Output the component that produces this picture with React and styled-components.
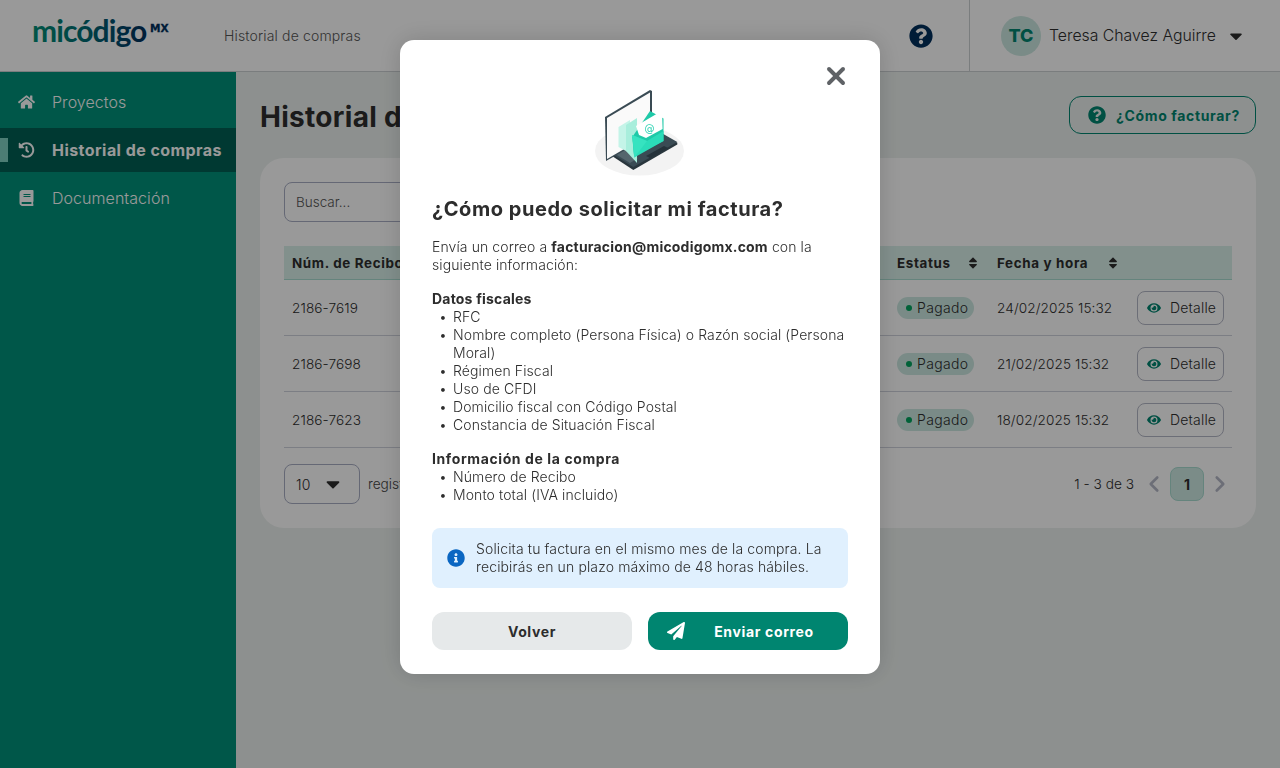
import React from "react";
import styled, { createGlobalStyle } from "styled-components";
import {
  FaHome, FaHistory, FaBook, FaQuestionCircle, FaEye, FaSort, FaCaretDown,
  FaPaperPlane, FaInfoCircle,
} from "react-icons/fa";
import { X, ChevronLeft, ChevronRight } from "lucide-react";

const font = `"Inter", "Noto Sans", sans-serif`;
const ink = "#2d2d2d";

const Global = createGlobalStyle`
  * { box-sizing: border-box; }
  html, body { margin: 0; padding: 0; height: 100%; overflow: hidden; }
  body { font-family: ${font}; color: ${ink}; font-size: 14px; }
`;

const Page = styled.div`
  height: 768px;
  display: grid;
  grid-template-columns: 236px 1fr;
  grid-template-rows: 72px 1fr;
  background: #ecf1ef;
`;

const Header = styled.header`
  grid-column: 1 / 3;
  display: flex;
  align-items: stretch;
  background: #fff;
  border-bottom: 1px solid #ccd0d3;
`;
const LogoBox = styled.div`
  width: 224px;
  padding-left: 30px;
  display: flex;
  align-items: center;
`;
const Crumb = styled.div`
  flex: 1;
  display: flex;
  align-items: center;
  font-size: 14px;
  letter-spacing: 0.15px;
  font-weight: 300;
  color: #555;
`;
const HelpBox = styled.div`
  width: 60px;
  margin-right: 18px;
  display: flex;
  align-items: center;
  justify-content: center;
  color: #002f5c;
  font-size: 24px;
`;
const User = styled.div`
  width: 311px;
  border-left: 1px solid #ccd0d3;
  padding-left: 31px;
  display: flex;
  align-items: center;
  gap: 8px;
`;
const Avatar = styled.div`
  width: 40px;
  height: 40px;
  border-radius: 50%;
  background: #cce8e1;
  color: #008570;
  font-weight: 800;
  font-size: 18px;
  display: flex;
  align-items: center;
  justify-content: center;
`;
const UserName = styled.span`
  font-size: 15.8px;
  font-weight: 300;
  width: 169px;
  white-space: nowrap;
  color: ${ink};
`;

const Sidebar = styled.nav`
  background: #00917a;
  padding-top: 8px;
  display: flex;
  flex-direction: column;
  gap: 4px;
`;
const NavItem = styled.div`
  position: relative;
  height: 44px;
  display: flex;
  align-items: center;
  gap: 17px;
  padding-left: 18px;
  font-size: 16px;
  font-weight: ${(p) => (p.$active ? 700 : 300)};
  letter-spacing: ${(p) => (p.$active ? 0.45 : 0.05)}px;
  color: #fff;
  background: ${(p) => (p.$active ? "#006054" : "transparent")};
  white-space: nowrap;
  svg { font-size: 16px; flex: none; width: 17px; }
`;
const NavMark = styled.span`
  position: absolute;
  left: 0;
  top: 10px;
  width: 8px;
  height: 24px;
  background: #7fd1c1;
`;

const Main = styled.main`
  padding: 24px;
  min-width: 0;
`;
const TitleRow = styled.div`
  height: 38px;
  display: flex;
  align-items: center;
  justify-content: space-between;
  margin-bottom: 24px;
`;
const Title = styled.h1`
  margin: 3px 0 0;
  font-size: 28px;
  letter-spacing: 0.3px;
  font-weight: 700;
  color: ${ink};
`;
const HowButton = styled.button`
  width: 187px;
  height: 38px;
  border: 1px solid #008570;
  border-radius: 12px;
  background: transparent;
  color: #008570;
  font-family: ${font};
  font-weight: 700;
  font-size: 14px;
  letter-spacing: 0.65px;
  display: flex;
  align-items: center;
  gap: 10px;
  padding: 0 0 0 18px;
  white-space: nowrap;
  svg { font-size: 18px; flex: none; }
`;
const Card = styled.section`
  background: #fff;
  border-radius: 24px;
  padding: 24px;
  height: 370px;
`;
const Search = styled.div`
  width: 400px;
  height: 40px;
  border: 1px solid #a9aec4;
  border-radius: 8px;
  display: flex;
  align-items: center;
  padding-left: 11px;
  font-size: 13.5px;
  font-weight: 300;
  color: #555;
  margin-bottom: 24px;
`;
const Row = styled.div`
  display: grid;
  grid-template-columns: 605px 100px 140px 103px;
  align-items: center;
  height: ${(p) => (p.$head ? 34 : 56)}px;
  background: ${(p) => (p.$head ? "#d9f0ea" : "transparent")};
  border-bottom: 1px solid ${(p) => (p.$head ? "#a9dcd0" : "#cfd2dc")};
`;
const Cell = styled.div`
  padding-left: 8px;
  font-size: 13.6px;
  letter-spacing: 0.1px;
  font-weight: 300;
  color: ${ink};
  white-space: nowrap;
  display: flex;
  align-items: center;
`;
const HeadCell = styled(Cell)`
  font-weight: 700;
  font-size: 13.4px;
  letter-spacing: 0.65px;
  gap: ${(p) => p.$gap || 0}px;
  svg { font-size: 14px; color: ${ink}; flex: none; }
`;
const Pill = styled.span`
  display: inline-flex;
  align-items: center;
  gap: 5px;
  height: 22px;
  padding: 0 6px 0 9px;
  border-radius: 11px;
  background: #cce8e1;
  font-size: 14px;
  letter-spacing: 0.35px;
  font-weight: 300;
  &::before {
    content: "";
    width: 6px;
    height: 6px;
    border-radius: 50%;
    background: #00a35e;
  }
`;
const DetailButton = styled.button`
  width: 87px;
  height: 34px;
  border: 1px solid #b5b8c6;
  border-radius: 8px;
  background: #fff;
  font-family: ${font};
  font-size: 14px;
  letter-spacing: 0.2px;
  font-weight: 300;
  color: ${ink};
  display: flex;
  align-items: center;
  gap: 9px;
  padding: 0 0 0 9px;
  svg { color: #008570; font-size: 14px; flex: none; }
`;
const Footer = styled.div`
  margin-top: 16px;
  display: flex;
  align-items: center;
  height: 40px;
`;
const Select = styled.div`
  width: 76px;
  height: 40px;
  border: 1px solid #a9aec4;
  border-radius: 8px;
  display: flex;
  align-items: center;
  justify-content: space-between;
  padding: 0 15px 0 11px;
  font-size: 14px;
  font-weight: 300;
  letter-spacing: 0.2px;
  svg { font-size: 22px; }
  margin-right: 8px;
`;
const Muted = styled.span`
  font-size: 13.7px;
  font-weight: 300;
  color: #444;
`;
const Pager = styled.div`
  margin-left: auto;
  margin-right: -1px;
  display: flex;
  align-items: center;
  gap: 3px;
`;
const PageCount = styled(Muted)`
  margin-right: 4px;
  color: ${ink};
`;
const PageNow = styled.span`
  width: 34px;
  height: 34px;
  border-radius: 8px;
  border: 1px solid #a9dcd0;
  background: #cde9e3;
  display: flex;
  align-items: center;
  justify-content: center;
  font-weight: 700;
  font-size: 14px;
`;

const Overlay = styled.div`
  position: fixed;
  inset: 0;
  background: rgba(0, 0, 0, 0.4);
  display: flex;
  justify-content: center;
  align-items: flex-start;
  padding-top: 40px;
`;
const Modal = styled.div`
  position: relative;
  width: 480px;
  height: 634px;
  background: #fff;
  border-radius: 14px;
  padding: 50px 32px 24px;
  box-shadow: 0 0 24px rgba(0, 0, 0, 0.16);
  display: flex;
  flex-direction: column;
`;
const CloseButton = styled.button`
  position: absolute;
  top: 22px;
  right: 30px;
  width: 28px;
  height: 28px;
  padding: 0;
  border: 0;
  background: none;
  color: #5f6266;
  display: flex;
  align-items: center;
  justify-content: center;
`;
const Illustration = styled.div`
  height: 86px;
  display: flex;
  justify-content: center;
  margin-bottom: 20px;
`;
const ModalTitle = styled.h2`
  margin: 0 0 16px;
  font-size: 20px;
  letter-spacing: 0.55px;
  line-height: 26px;
  font-weight: 700;
  color: ${ink};
`;
const Para = styled.p`
  margin: 0 0 16px;
  font-size: 14px;
  letter-spacing: 0.1px;
  line-height: 18px;
  font-weight: 300;
  color: ${ink};
  b { font-weight: 700; letter-spacing: 0.2px; }
`;
const Block = styled.div`
  margin-bottom: 16px;
  font-size: 14px;
  letter-spacing: 0.1px;
  line-height: 18px;
  font-weight: 300;
  color: ${ink};
`;
const BlockTitle = styled.div`
  font-weight: 700;
  letter-spacing: ${(p) => p.$spacing}px;
`;
const List = styled.ul`
  margin: 0;
  padding: 0 0 0 21px;
  list-style: none;
  li { position: relative; }
  li::before {
    content: "•";
    position: absolute;
    left: -14px;
  }
`;
const Alert = styled.div`
  height: 60px;
  margin-top: 8px;
  border-radius: 8px;
  background: #e0f0fe;
  display: flex;
  align-items: center;
  gap: 11px;
  padding: 0 15px;
  font-size: 14px;
  letter-spacing: 0.13px;
  line-height: 18px;
  font-weight: 300;
  color: ${ink};
  svg { color: #0a66c2; font-size: 18px; flex: none; }
`;
const Actions = styled.div`
  margin-top: 24px;
  display: grid;
  grid-template-columns: 1fr 1fr;
  gap: 16px;
`;
const ActionButton = styled.button`
  position: relative;
  height: 38px;
  border: 0;
  border-radius: 12px;
  font-family: ${font};
  font-size: 14px;
  letter-spacing: 0.65px;
  font-weight: 700;
  background: ${(p) => (p.$primary ? "#008570" : "#e6e9ea")};
  color: ${(p) => (p.$primary ? "#fff" : ink)};
  display: flex;
  align-items: center;
  justify-content: center;
  padding: ${(p) => (p.$primary ? "0 0 0 32px" : "0")};
  svg {
    position: absolute;
    left: 19px;
    top: 10px;
    font-size: 18px;
  }
`;

const Logo = () => (
  <svg width="150" height="44" viewBox="0 0 150 44">
    <defs>
      <linearGradient id="logoInk" gradientUnits="userSpaceOnUse" x1="2" y1="0" x2="110" y2="0">
        <stop offset="0" stopColor="#009078" />
        <stop offset="0.45" stopColor="#007074" />
        <stop offset="0.75" stopColor="#005070" />
        <stop offset="1" stopColor="#00355f" />
      </linearGradient>
    </defs>
    <text x="2" y="27.5" fontFamily="Lato, sans-serif" fontSize="30" fontWeight="700" letterSpacing="-0.9" fill="url(#logoInk)">
      micódigo
    </text>
    <text x="120" y="18" fontFamily="'DejaVu Sans', sans-serif" fontSize="10.5" fontWeight="700" fill="#002f5c" stroke="#002f5c" strokeWidth="0.3">
      MX
    </text>
  </svg>
);

const MailLaptop = () => (
  <svg width="100" height="86" viewBox="0 5 100 86">
    <ellipse cx="49.5" cy="66" rx="44.5" ry="24.5" fill="#f3f3f3" />
    <polygon points="16.7,67.5 43.3,85 87.3,59.5 87.3,57.7 61,43 16.7,65" fill="#29363d" />
    <polygon points="16.7,65.7 43.3,82 87.3,57 61,42" fill="#3a4b54" />
    <polygon points="22,67 40,78 48,73 30,62" fill="#54656d" />
    <polygon points="56,71 74,61 78,63 60,73" fill="#25323a" />
    <polygon points="15,32 60,5 62,6 62,50 16,76" fill="#3a4b54" />
    <polygon points="17,33 60,7.5 60,49 17,74" fill="#fafafa" />
    <polygon points="28.5,42 40,35 40,68 36,66 28.5,62" fill="#c4f4e8" />
    <polygon points="36,40 47,33 47,78 36,66" fill="#a8eedc" />
    <polygon points="42.3,52 60,26 73.5,33.5 73.5,56 44,71" fill="#1fc9a8" />
    <polygon points="46,41 72,25.8 72.6,44 56,53 49,50" fill="#ffffff" />
    <polygon points="42.3,50 57,56 73.5,46 73.5,56 44.3,72.5" fill="#2bdcb9" />
    <polygon points="42.3,50 57,56 44.3,72.5" fill="#36e3c0" />
    <text x="59.5" y="47" fontFamily="'DejaVu Sans', sans-serif" fontSize="10" fill="#1fd0ae" textAnchor="middle">@</text>
  </svg>
);

const rows = [
  ["2186-7619", "24/02/2025 15:32"],
  ["2186-7698", "21/02/2025 15:32"],
  ["2186-7623", "18/02/2025 15:32"],
];

export default function App() {
  return (
    <>
      <Global />
      <Page>
        <Header>
          <LogoBox><Logo /></LogoBox>
          <Crumb>Historial de compras</Crumb>
          <HelpBox><FaQuestionCircle /></HelpBox>
          <User>
            <Avatar>TC</Avatar>
            <UserName>Teresa Chavez Aguirre</UserName>
            <FaCaretDown size={20} color={ink} />
          </User>
        </Header>
        <Sidebar>
          <NavItem><FaHome />Proyectos</NavItem>
          <NavItem $active><NavMark /><FaHistory />Historial de compras</NavItem>
          <NavItem><FaBook />Documentación</NavItem>
        </Sidebar>
        <Main>
          <TitleRow>
            <Title>Historial de compras</Title>
            <HowButton><FaQuestionCircle />¿Cómo facturar?</HowButton>
          </TitleRow>
          <Card>
            <Search>Buscar...</Search>
            <Row $head>
              <HeadCell>Núm. de Recibo</HeadCell>
              <HeadCell $gap={15}>Estatus<FaSort /></HeadCell>
              <HeadCell $gap={18}>Fecha y hora<FaSort /></HeadCell>
              <HeadCell />
            </Row>
            {rows.map(([id, date]) => (
              <Row key={id}>
                <Cell>{id}</Cell>
                <Cell><Pill>Pagado</Pill></Cell>
                <Cell>{date}</Cell>
                <Cell><DetailButton><FaEye />Detalle</DetailButton></Cell>
              </Row>
            ))}
            <Footer>
              <Select>10<FaCaretDown /></Select>
              <Muted>registros</Muted>
              <Pager>
                <PageCount>1 - 3 de 3</PageCount>
                <ChevronLeft size={26} strokeWidth={2.4} color="#b5b8c6" />
                <PageNow>1</PageNow>
                <ChevronRight size={26} strokeWidth={2.4} color="#b5b8c6" />
              </Pager>
            </Footer>
          </Card>
        </Main>
      </Page>
      <Overlay>
        <Modal>
          <CloseButton aria-label="Cerrar"><X size={28} strokeWidth={3.4} /></CloseButton>
          <Illustration><MailLaptop /></Illustration>
          <ModalTitle>¿Cómo puedo solicitar mi factura?</ModalTitle>
          <Para>
            Envía un correo a <b>facturacion@micodigomx.com</b> con la siguiente información:
          </Para>
          <Block>
            <BlockTitle $spacing={0.2}>Datos fiscales</BlockTitle>
            <List>
              <li>RFC</li>
              <li>Nombre completo (Persona Física) o Razón social (Persona Moral)</li>
              <li>Régimen Fiscal</li>
              <li>Uso de CFDI</li>
              <li>Domicilio fiscal con Código Postal</li>
              <li>Constancia de Situación Fiscal</li>
            </List>
          </Block>
          <Block>
            <BlockTitle $spacing={0.6}>Información de la compra</BlockTitle>
            <List>
              <li>Número de Recibo</li>
              <li>Monto total (IVA incluido)</li>
            </List>
          </Block>
          <Alert>
            <FaInfoCircle />
            <span>Solicita tu factura en el mismo mes de la compra. La recibirás en un plazo máximo de 48 horas hábiles.</span>
          </Alert>
          <Actions>
            <ActionButton>Volver</ActionButton>
            <ActionButton $primary><FaPaperPlane />Enviar correo</ActionButton>
          </Actions>
        </Modal>
      </Overlay>
    </>
  );
}
